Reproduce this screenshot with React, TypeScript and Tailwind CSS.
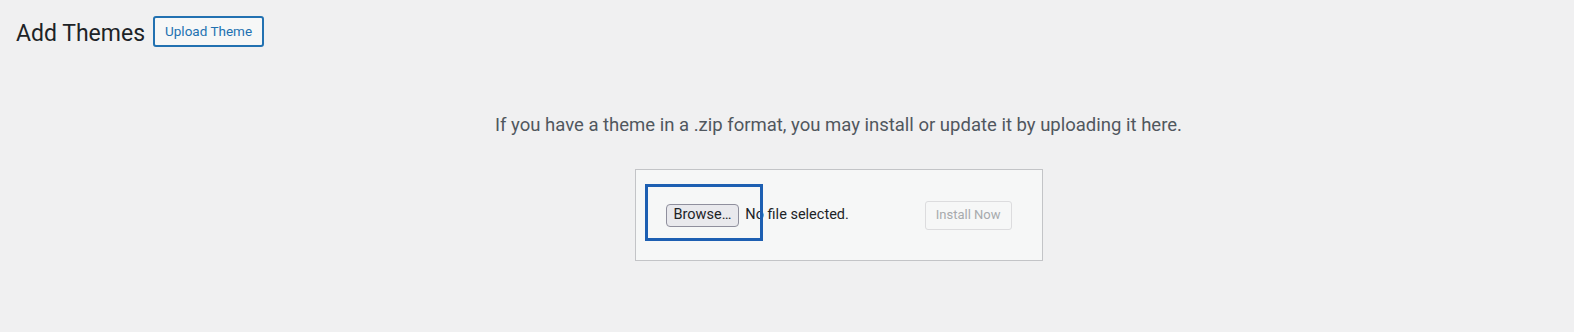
export default function App() {
  return (
    <div className="min-h-[332px] bg-[#f0f0f1] font-['Roboto',sans-serif] text-[#3c434a]">
      {/* Page header */}
      <div className="flex items-center gap-2 pl-4 pt-4">
        <h1 className="mt-[4px] text-[23px] leading-[27px] font-normal text-[#1d2327]">Add Themes</h1>
        <button className="h-[31px] rounded-[3px] border-2 border-[#2271b1] bg-[#f6f7f7] px-[10px] text-[13.5px] leading-none text-[#2271b1]">
          Upload Theme
        </button>
      </div>

      {/* Upload area */}
      <div className="flex flex-col items-center pl-[103px]">
        <p className="mt-[65px] text-[18.5px] leading-[27px] text-[#50575e]">
          If you have a theme in a .zip format, you may install or update it by uploading it here.
        </p>

        <form className="relative mt-[30px] flex h-[92px] w-[408px] items-center justify-between border border-[#c3c4c7] bg-[#f6f7f7] px-[30px]">
          <div className="flex items-center">
            <span className="flex h-[23px] items-center rounded-[4px] border border-[#8f8f9d] bg-[#e9e9ed] px-[7px] text-[14.5px] text-[#1d2327]">
              Browse…
            </span>
            <span className="ml-[6px] text-[14.5px] text-[#1d2327]">No file selected.</span>
          </div>
          <button
            disabled
            className="h-[29px] rounded-[3px] border border-[#dcdcde] bg-[#f6f7f7] px-[10px] text-[13px] text-[#a7aaad]"
          >
            Install Now
          </button>

          {/* Focus highlight over the file input */}
          <div className="pointer-events-none absolute left-[9px] top-[14px] h-[57px] w-[118px] border-[3px] border-[#1d5fb2]" />
        </form>
      </div>
    </div>
  );
}
